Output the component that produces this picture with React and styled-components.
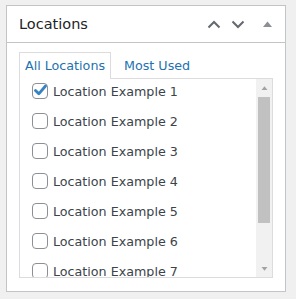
import React, { useState } from "react";
import styled, { createGlobalStyle } from "styled-components";

const GlobalStyle = createGlobalStyle`
    body {
        margin: 0;
        background: #f0f0f1;
        font-family: "DejaVu Sans", sans-serif;
    }
`

const Panel = styled.div`
    margin: 5px 0 0 6px;
    width: 278px;
    height: 285px;
    background: #fff;
    border: 1px solid #c3c4c7;
    display: flex;
    flex-direction: column;
`

const Header = styled.div`
    height: 36px;
    border-bottom: 1px solid #c3c4c7;
    display: flex;
    align-items: center;
    padding: 0 0 0 12px;
`

const Title = styled.h2`
    flex: 1;
    margin: 0;
    font-size: 14.5px;
    font-weight: 400;
    color: #1d2327;
`

const IconButton = styled.button`
    border: 0;
    background: none;
    padding: 0;
    width: ${p => p.$w}px;
    height: 36px;
    display: flex;
    align-items: center;
    justify-content: center;
    color: ${p => p.$dim ? "#8c8f94" : "#646970"};
`

const Body = styled.div`
    padding: 9px 12px 0 12px;
`

const Tabs = styled.div`
    display: flex;
    align-items: flex-end;
    gap: 12px;
`

const Tab = styled.div`
    position: relative;
    z-index: 1;
    height: 26px;
    line-height: 25px;
    padding: 0 5px 0 ${p => p.$active ? 5 : 0}px;
    margin-bottom: -1px;
    font-size: 12.7px;
    color: #2271b1;
    background: ${p => p.$active ? "#fff" : "transparent"};
    border: 1px solid ${p => p.$active ? "#dcdcde" : "transparent"};
    border-bottom: 0;
`

const List = styled.div`
    height: 198px;
    border: 1px solid #dcdcde;
    display: flex;
`

const Items = styled.div`
    flex: 1;
    overflow: hidden;
    padding-left: 12px;
`

const ScrollBar = styled.div`
    width: 16px;
    background: #f1f1f1;
    display: flex;
    flex-direction: column;
`

const ScrollButton = styled.div`
    height: 17px;
    display: flex;
    align-items: center;
    justify-content: center;
    color: #a3a3a3;
    padding-left: 1px;
`

const Thumb = styled.div`
    margin: 1px 2px 0 2px;
    height: 126px;
    background: #c1c1c1;
`

const Spacer = styled.div`
    flex: 1;
`

const Row = styled.label`
    display: flex;
    align-items: center;
    gap: 5px;
    height: 24px;
    margin-bottom: 6px;
    font-size: 12.7px;
    color: #3c434a;
    cursor: pointer;
`

const Box = styled.span`
    width: 14px;
    height: 14px;
    border: 1px solid #8c8f94;
    border-radius: 4px;
    background: #fff;
    position: relative;
    flex: none;

    svg {
        position: absolute;
        left: 0;
        top: 0;
    }
`

const ChevronUp = () => (
    <svg width="14" height="9" viewBox="0 0 14 9">
        <polyline points="1.5,7.5 7,2 12.5,7.5" fill="none" stroke="currentColor" strokeWidth="2" />
    </svg>
)

const ChevronDown = () => (
    <svg width="14" height="9" viewBox="0 0 14 9">
        <polyline points="1.5,1.5 7,7 12.5,1.5" fill="none" stroke="currentColor" strokeWidth="2" />
    </svg>
)

const Triangle = ({ down, w = 9, h = 6 }) => (
    <svg width={w} height={h} viewBox="0 0 9 6">
        <polygon points={down ? "0,0 4.5,5.5 9,0" : "0,6 4.5,0.5 9,6"} fill="currentColor" />
    </svg>
)

const Check = () => (
    <svg width="14" height="13" viewBox="0 0 14 13">
        <path d="M2.5 6.5 L5.8 9.8 L12.5 2" fill="none" stroke="#3582c4" strokeWidth="2.8" strokeLinecap="round" strokeLinejoin="round" />
    </svg>
)

const locations = [1, 2, 3, 4, 5, 6, 7, 8, 9].map(n => `Location Example ${n}`)

const App = () => {
    const [checked, setChecked] = useState({ 0: true })

    return (
        <>
            <GlobalStyle />
            <Panel>
                <Header>
                    <Title>Locations</Title>
                    <IconButton $w={25}><ChevronUp /></IconButton>
                    <IconButton $w={23}><ChevronDown /></IconButton>
                    <IconButton $w={36} $dim><Triangle /></IconButton>
                </Header>
                <Body>
                    <Tabs>
                        <Tab $active>All Locations</Tab>
                        <Tab>Most Used</Tab>
                    </Tabs>
                    <List>
                        <Items>
                            {locations.map((name, key) => (
                                <Row key={key} onClick={() => setChecked({ ...checked, [key]: !checked[key] })}>
                                    <Box>{checked[key] ? <Check /> : null}</Box>
                                    {name}
                                </Row>
                            ))}
                        </Items>
                        <ScrollBar>
                            <ScrollButton><Triangle w={7} h={4} /></ScrollButton>
                            <Thumb />
                            <Spacer />
                            <ScrollButton><Triangle down w={7} h={4} /></ScrollButton>
                        </ScrollBar>
                    </List>
                </Body>
            </Panel>
        </>
    );
}

export default App;
